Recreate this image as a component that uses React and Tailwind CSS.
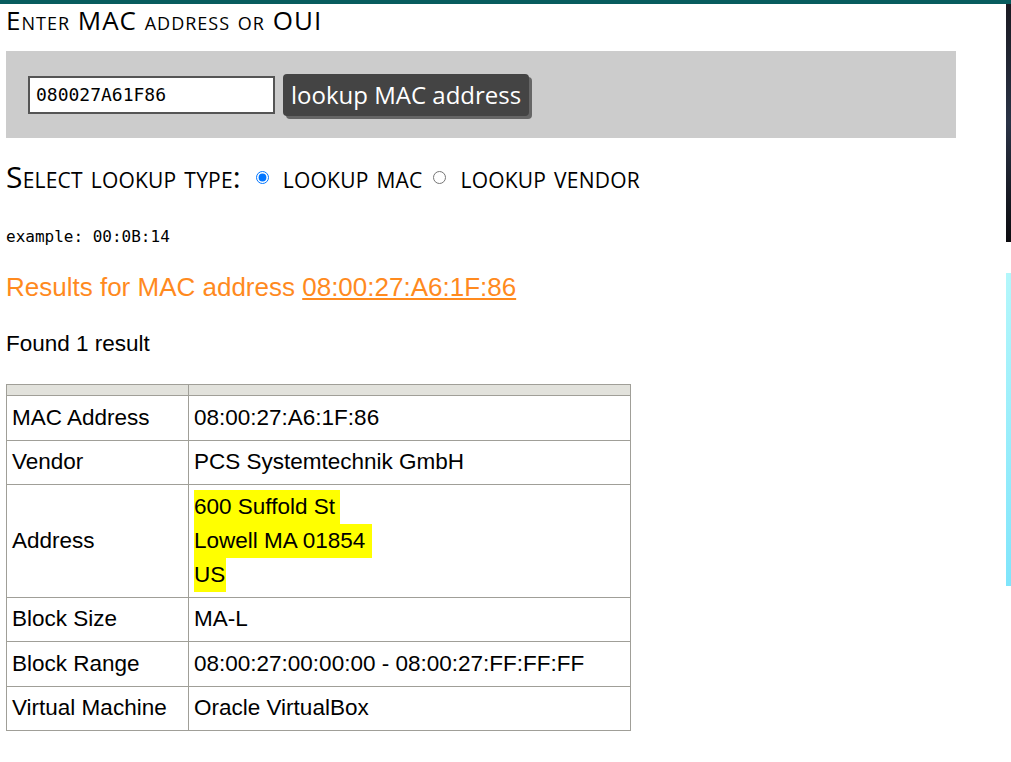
import React from "react";

// one row of the result table
const Fila = ({ label, children }) => (
  <tr>
    <td className="border border-[#a09f98] px-[5px] py-[4.75px] align-middle">{label}</td>
    <td className="border border-[#a09f98] px-[5px] py-[4.75px] align-middle">{children}</td>
  </tr>
);

const App = () => {
  return (
    <div className="min-h-[762px] w-[1011px] bg-white text-black">
      {/* barra superior */}
      <div className="h-[4px] bg-[#075c5e]" />

      <div className="flex">
        {/* contenido principal */}
        <div className="w-[1006px] pl-[6px]">
          <h2
            className="text-[26px] leading-[32px] tracking-[1px] [font-variant:small-caps] text-black"
            style={{ fontFamily: '"Open Sans", sans-serif' }}
          >
            Enter MAC address or OUI
          </h2>

          <div className="mt-[15px] flex h-[87px] w-[950px] items-center bg-[#cccccc] pl-[22px]">
            <input
              type="text"
              defaultValue="080027A61F86"
              className="h-[38px] w-[247px] border-2 border-[#555555] bg-white px-[6px] text-[18px] text-black outline-none"
              style={{ fontFamily: '"DejaVu Sans Mono", monospace' }}
            />
            <button
              className="ml-[8px] h-[42px] rounded-[4px] bg-[#444444] px-[8px] text-[24px] leading-[30px] text-white shadow-[3px_3px_0_#666666]"
              style={{ fontFamily: '"Open Sans", sans-serif' }}
            >
              lookup MAC address
            </button>
          </div>

          <div
            className="mt-[21px] flex items-center text-[30px] leading-[36px] tracking-[0.2px] [font-variant:small-caps]"
            style={{ fontFamily: '"Open Sans", sans-serif' }}
          >
            <span>Select lookup type:</span>
            <label className="ml-[15px] flex items-center">
              <input type="radio" name="tipo" defaultChecked className="h-[13px] w-[13px] accent-[#0075ff]" />
              <span className="ml-[14px]">lookup mac</span>
            </label>
            <label className="ml-[11px] flex items-center">
              <input type="radio" name="tipo" className="h-[13px] w-[13px]" />
              <span className="ml-[14px]">lookup vendor</span>
            </label>
          </div>

          <p
            className="mt-[32px] text-[16px] leading-[20px]"
            style={{ fontFamily: '"DejaVu Sans Mono", monospace' }}
          >
            example: 00:0B:14
          </p>

          <div style={{ fontFamily: '"Liberation Sans", Arial, sans-serif' }}>
            <h3 className="mt-[25px] text-[26px] leading-[30px] text-[#ff8a1e]">
              Results for MAC address <a className="underline">08:00:27:A6:1F:86</a>
            </h3>

            <p className="mt-[29px] text-[22.5px] leading-[26px]">Found 1 result</p>

            <table className="mt-[27px] w-[625px] border-collapse text-[22.5px] leading-[34px]">
              <thead>
                <tr className="h-[11px] bg-[#e2e2dc]">
                  <th className="w-[182px] border border-[#a09f98] p-0" />
                  <th className="border border-[#a09f98] p-0" />
                </tr>
              </thead>
              <tbody>
                <Fila label="MAC Address">08:00:27:A6:1F:86</Fila>
                <Fila label="Vendor">PCS Systemtechnik GmbH</Fila>
                <Fila label="Address">
                  <div className="w-fit bg-[#ffff00] pr-[5px]">600 Suffold St</div>
                  <div className="w-fit bg-[#ffff00] pr-[7px]">Lowell MA 01854</div>
                  <div className="w-fit bg-[#ffff00] pr-[1px]">US</div>
                </Fila>
                <Fila label="Block Size">MA-L</Fila>
                <Fila label="Block Range">08:00:27:00:00:00 - 08:00:27:FF:FF:FF</Fila>
                <Fila label="Virtual Machine">Oracle VirtualBox</Fila>
              </tbody>
            </table>
          </div>
        </div>

        {/* franja derecha */}
        <div className="w-[5px]">
          <div className="h-[238px] bg-gradient-to-b from-[#1a1a22] via-[#2a3346] to-[#0c0c10]" />
          <div className="mt-[31px] h-[313px] bg-gradient-to-b from-[#b3f7fb] to-[#7fe5fb]" />
        </div>
      </div>
    </div>
  );
};

export default App;
